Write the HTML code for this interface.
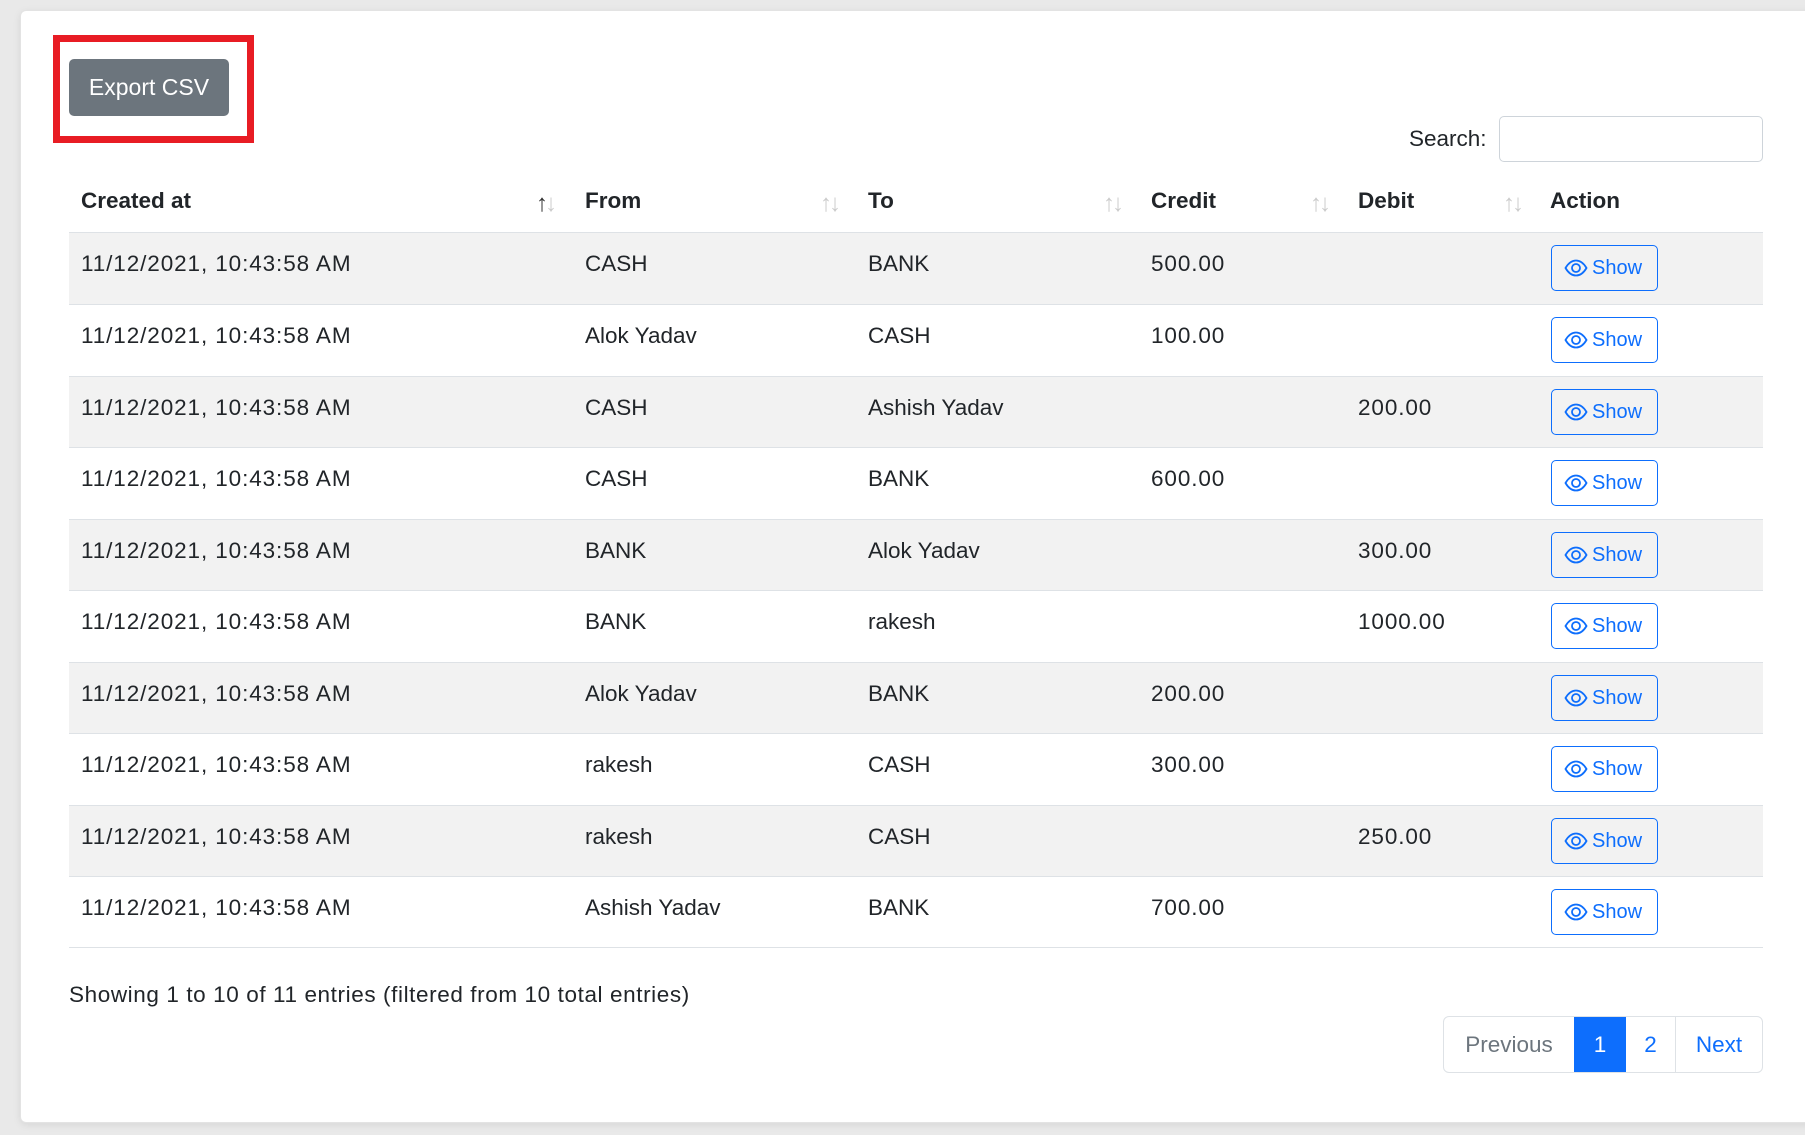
<!DOCTYPE html>
<html><head><meta charset="utf-8"><style>
*{box-sizing:border-box;margin:0;padding:0}
body{width:1805px;height:1135px;background:#e9e9e9;font-family:"Liberation Sans",sans-serif;color:#212529;position:relative;overflow:hidden}
.card{position:absolute;left:20px;top:10px;width:1800px;height:1113px;background:#fff;border:1px solid #e3e3e3;border-radius:6px;box-shadow:0 2px 8px rgba(0,0,0,.08)}
.red{position:absolute;left:53px;top:35px;width:201px;height:108px;border:7px solid #e81c24}
.btn{position:absolute;left:69px;top:59px;width:160px;height:57px;background:#6c757d;border-radius:5px;color:#fff;font-size:23px;line-height:57px;text-align:center}
.slabel{position:absolute;left:1409px;top:126px;font-size:22.5px}
.sinput{position:absolute;left:1499px;top:116px;width:264px;height:46px;border:1px solid #ced4da;border-radius:5px}
.th{position:absolute;top:188px;font-size:22.5px;font-weight:bold}
.sort{position:absolute;top:190px;font-size:24px;color:#ccc;letter-spacing:-3px}
.sort b{color:#333;font-weight:normal}
.row{position:absolute;left:69px;width:1694px;height:72px;border-top:1px solid #dee2e6}
.row.odd{background:#f2f2f2}
.cell{position:absolute;top:18px;font-size:22.5px}
.d{letter-spacing:0.9px}
.show{position:absolute;left:1482px;top:12px;width:107px;height:46px;border:1px solid #0d6efd;border-radius:5px;color:#0d6efd;font-size:20px;line-height:44px;padding-left:40px}
.show svg{position:absolute;left:12px;top:13px}
.tend{position:absolute;left:69px;top:947px;width:1694px;border-top:1px solid #dee2e6}
.info{position:absolute;left:69px;top:982px;font-size:22.5px;letter-spacing:0.6px}
.pag{position:absolute;left:1443px;top:1016px;height:57px;width:320px;border:1px solid #dee2e6;border-radius:6px;display:flex;overflow:hidden;font-size:22.5px}
.pag div{line-height:55px;text-align:center;color:#0d6efd}
</style></head><body>
<div class="card"></div>
<div class="red"></div>
<div class="btn">Export CSV</div>
<div class="slabel">Search:</div>
<div class="sinput"></div>
<div class="th" style="left:81px">Created at</div>
<div class="th" style="left:585px">From</div>
<div class="th" style="left:868px">To</div>
<div class="th" style="left:1151px">Credit</div>
<div class="th" style="left:1358px">Debit</div>
<div class="th" style="left:1550px">Action</div>
<div class="sort" style="left:536px"><b>↑</b>↓</div>
<div class="sort" style="left:820px">↑↓</div>
<div class="sort" style="left:1103px">↑↓</div>
<div class="sort" style="left:1310px">↑↓</div>
<div class="sort" style="left:1503px">↑↓</div>
<div class="row odd" style="top:232px"><div class="cell d" style="left:12px">11/12/2021, 10:43:58 AM</div><div class="cell" style="left:516px">CASH</div><div class="cell" style="left:799px">BANK</div><div class="cell d" style="left:1082px">500.00</div><div class="show"><svg width="24" height="18" viewBox="0 0 24 18"><path d="M1.5 9C5 3 9 1.5 12 1.5S19 3 22.5 9C19 15 15 16.5 12 16.5S5 15 1.5 9Z" fill="none" stroke="#0d6efd" stroke-width="1.8"/><circle cx="12" cy="9" r="4" fill="none" stroke="#0d6efd" stroke-width="1.8"/></svg>Show</div></div>
<div class="row" style="top:304px"><div class="cell d" style="left:12px">11/12/2021, 10:43:58 AM</div><div class="cell" style="left:516px">Alok Yadav</div><div class="cell" style="left:799px">CASH</div><div class="cell d" style="left:1082px">100.00</div><div class="show"><svg width="24" height="18" viewBox="0 0 24 18"><path d="M1.5 9C5 3 9 1.5 12 1.5S19 3 22.5 9C19 15 15 16.5 12 16.5S5 15 1.5 9Z" fill="none" stroke="#0d6efd" stroke-width="1.8"/><circle cx="12" cy="9" r="4" fill="none" stroke="#0d6efd" stroke-width="1.8"/></svg>Show</div></div>
<div class="row odd" style="top:375.5px"><div class="cell d" style="left:12px">11/12/2021, 10:43:58 AM</div><div class="cell" style="left:516px">CASH</div><div class="cell" style="left:799px">Ashish Yadav</div><div class="cell d" style="left:1289px">200.00</div><div class="show"><svg width="24" height="18" viewBox="0 0 24 18"><path d="M1.5 9C5 3 9 1.5 12 1.5S19 3 22.5 9C19 15 15 16.5 12 16.5S5 15 1.5 9Z" fill="none" stroke="#0d6efd" stroke-width="1.8"/><circle cx="12" cy="9" r="4" fill="none" stroke="#0d6efd" stroke-width="1.8"/></svg>Show</div></div>
<div class="row" style="top:447px"><div class="cell d" style="left:12px">11/12/2021, 10:43:58 AM</div><div class="cell" style="left:516px">CASH</div><div class="cell" style="left:799px">BANK</div><div class="cell d" style="left:1082px">600.00</div><div class="show"><svg width="24" height="18" viewBox="0 0 24 18"><path d="M1.5 9C5 3 9 1.5 12 1.5S19 3 22.5 9C19 15 15 16.5 12 16.5S5 15 1.5 9Z" fill="none" stroke="#0d6efd" stroke-width="1.8"/><circle cx="12" cy="9" r="4" fill="none" stroke="#0d6efd" stroke-width="1.8"/></svg>Show</div></div>
<div class="row odd" style="top:518.5px"><div class="cell d" style="left:12px">11/12/2021, 10:43:58 AM</div><div class="cell" style="left:516px">BANK</div><div class="cell" style="left:799px">Alok Yadav</div><div class="cell d" style="left:1289px">300.00</div><div class="show"><svg width="24" height="18" viewBox="0 0 24 18"><path d="M1.5 9C5 3 9 1.5 12 1.5S19 3 22.5 9C19 15 15 16.5 12 16.5S5 15 1.5 9Z" fill="none" stroke="#0d6efd" stroke-width="1.8"/><circle cx="12" cy="9" r="4" fill="none" stroke="#0d6efd" stroke-width="1.8"/></svg>Show</div></div>
<div class="row" style="top:590px"><div class="cell d" style="left:12px">11/12/2021, 10:43:58 AM</div><div class="cell" style="left:516px">BANK</div><div class="cell" style="left:799px">rakesh</div><div class="cell d" style="left:1289px">1000.00</div><div class="show"><svg width="24" height="18" viewBox="0 0 24 18"><path d="M1.5 9C5 3 9 1.5 12 1.5S19 3 22.5 9C19 15 15 16.5 12 16.5S5 15 1.5 9Z" fill="none" stroke="#0d6efd" stroke-width="1.8"/><circle cx="12" cy="9" r="4" fill="none" stroke="#0d6efd" stroke-width="1.8"/></svg>Show</div></div>
<div class="row odd" style="top:661.5px"><div class="cell d" style="left:12px">11/12/2021, 10:43:58 AM</div><div class="cell" style="left:516px">Alok Yadav</div><div class="cell" style="left:799px">BANK</div><div class="cell d" style="left:1082px">200.00</div><div class="show"><svg width="24" height="18" viewBox="0 0 24 18"><path d="M1.5 9C5 3 9 1.5 12 1.5S19 3 22.5 9C19 15 15 16.5 12 16.5S5 15 1.5 9Z" fill="none" stroke="#0d6efd" stroke-width="1.8"/><circle cx="12" cy="9" r="4" fill="none" stroke="#0d6efd" stroke-width="1.8"/></svg>Show</div></div>
<div class="row" style="top:733px"><div class="cell d" style="left:12px">11/12/2021, 10:43:58 AM</div><div class="cell" style="left:516px">rakesh</div><div class="cell" style="left:799px">CASH</div><div class="cell d" style="left:1082px">300.00</div><div class="show"><svg width="24" height="18" viewBox="0 0 24 18"><path d="M1.5 9C5 3 9 1.5 12 1.5S19 3 22.5 9C19 15 15 16.5 12 16.5S5 15 1.5 9Z" fill="none" stroke="#0d6efd" stroke-width="1.8"/><circle cx="12" cy="9" r="4" fill="none" stroke="#0d6efd" stroke-width="1.8"/></svg>Show</div></div>
<div class="row odd" style="top:804.5px"><div class="cell d" style="left:12px">11/12/2021, 10:43:58 AM</div><div class="cell" style="left:516px">rakesh</div><div class="cell" style="left:799px">CASH</div><div class="cell d" style="left:1289px">250.00</div><div class="show"><svg width="24" height="18" viewBox="0 0 24 18"><path d="M1.5 9C5 3 9 1.5 12 1.5S19 3 22.5 9C19 15 15 16.5 12 16.5S5 15 1.5 9Z" fill="none" stroke="#0d6efd" stroke-width="1.8"/><circle cx="12" cy="9" r="4" fill="none" stroke="#0d6efd" stroke-width="1.8"/></svg>Show</div></div>
<div class="row" style="top:876px"><div class="cell d" style="left:12px">11/12/2021, 10:43:58 AM</div><div class="cell" style="left:516px">Ashish Yadav</div><div class="cell" style="left:799px">BANK</div><div class="cell d" style="left:1082px">700.00</div><div class="show"><svg width="24" height="18" viewBox="0 0 24 18"><path d="M1.5 9C5 3 9 1.5 12 1.5S19 3 22.5 9C19 15 15 16.5 12 16.5S5 15 1.5 9Z" fill="none" stroke="#0d6efd" stroke-width="1.8"/><circle cx="12" cy="9" r="4" fill="none" stroke="#0d6efd" stroke-width="1.8"/></svg>Show</div></div>
<div class="tend"></div>
<div class="info">Showing 1 to 10 of 11 entries (filtered from 10 total entries)</div>
<div class="pag"><div style="width:130px;color:#6c757d">Previous</div><div style="width:52px;background:#0d6efd;color:#fff">1</div><div style="width:50px;border-right:1px solid #dee2e6">2</div><div style="flex:1">Next</div></div>
</body></html>
